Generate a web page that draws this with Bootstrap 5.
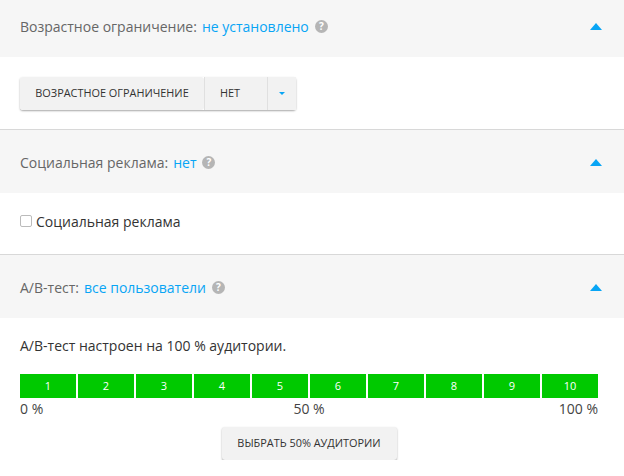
<!DOCTYPE html>
<html lang="ru">
<head>
  <meta charset="UTF-8">
  <meta name="viewport" content="width=device-width, initial-scale=1.0">
  <title>Настройки</title>
  <link href="https://cdn.jsdelivr.net/npm/bootstrap@5.3.2/dist/css/bootstrap.min.css" rel="stylesheet">
  <style>
    body {
      background-color: #fff;
      color: #333;
      font-family: "Open Sans", "Noto Sans", sans-serif;
      font-size: 14px;
      overflow: hidden;
    }
    .sec-head {
      height: 57px;
      padding: 0 20px 5px;
      background-color: #f6f6f6;
      color: #666;
    }
    .sec-head.tall {
      height: 62px;
      padding-bottom: 0;
    }
    .sec-value {
      color: #08a5f5;
      margin-left: 5px;
    }
    .help-dot {
      width: 13px;
      height: 13px;
      margin-left: 6px;
      border-radius: 50%;
      background-color: #b5b5b5;
      color: #fff;
      font-size: 10px;
      font-weight: 700;
      line-height: 13px;
      text-align: center;
    }
    .arrow-up {
      width: 0;
      height: 0;
      margin-left: auto;
      margin-right: 2px;
      border-left: 6px solid transparent;
      border-right: 6px solid transparent;
      border-bottom: 7px solid #08a5f5;
    }
    .sec-body-age {
      height: 72px;
      padding: 20px 20px 0;
    }
    .sec-body-social {
      height: 61px;
      padding: 0 20px 5px;
    }
    .sec-line {
      height: 2px;
      background: #f6f6f6;
      border-top: 1px solid #d8d8d8;
    }
    .gray-btn {
      height: 33px;
      padding: 0 15px;
      border: 0;
      border-radius: 3px;
      background-color: #f2f2f2;
      box-shadow: 0 1px 2px rgba(0, 0, 0, .35);
      color: #333;
      font-size: 10.9px;
      text-transform: uppercase;
    }
    .gray-btn.mid {
      border-radius: 0;
      border-left: 1px solid #e0e0e0;
    }
    .gray-btn.btn-name {
      width: 184px;
    }
    .gray-btn.btn-value {
      width: 63px;
      text-align: left;
    }
    .gray-btn.btn-caret {
      width: 29px;
      padding: 0;
    }
    .gray-btn-group {
      box-shadow: 0 1px 2px rgba(0, 0, 0, .35);
      border-radius: 3px;
    }
    .gray-btn-group .gray-btn {
      box-shadow: none;
    }
    .arrow-down {
      width: 0;
      height: 0;
      border-left: 3px solid transparent;
      border-right: 3px solid transparent;
      border-top: 3px solid #08a5f5;
    }
    .check-box {
      width: 12px;
      height: 12px;
      margin-right: 4px;
      border: 1px solid #bbb;
      border-radius: 2px;
      background: #fff;
    }
    .ab-body {
      padding: 18px 26px 0 20px;
    }
    .ab-title {
      line-height: 19px;
      margin-bottom: 19px;
    }
    .ab-bar {
      display: grid;
      grid-template-columns: repeat(10, 56px);
      gap: 2px;
    }
    .ab-cell {
      height: 24px;
      background-color: #00c900;
      color: #fff;
      font-size: 11px;
      font-weight: 500;
      line-height: 24px;
      text-align: center;
    }
    .ab-scale {
      line-height: 22px;
      margin-bottom: 7px;
      color: #444;
    }
    .ab-scale span {
      flex: 1 1 0;
    }
    .ab-choose {
      width: 175px;
    }
  </style>
</head>
<body>

  <div class="sec-head d-flex align-items-center">
    <span>Возрастное ограничение:</span>
    <span class="sec-value">не установлено</span>
    <span class="help-dot">?</span>
    <span class="arrow-up"></span>
  </div>
  <div class="sec-body-age">
    <div class="gray-btn-group d-inline-flex">
      <button type="button" class="gray-btn btn-name">Возрастное ограничение</button>
      <button type="button" class="gray-btn mid btn-value">Нет</button>
      <button type="button" class="gray-btn mid btn-caret d-flex align-items-center justify-content-center"><span class="arrow-down"></span></button>
    </div>
  </div>
  <div class="sec-line"></div>

  <div class="sec-head tall d-flex align-items-center">
    <span>Социальная реклама:</span>
    <span class="sec-value">нет</span>
    <span class="help-dot">?</span>
    <span class="arrow-up"></span>
  </div>
  <div class="sec-body-social d-flex align-items-center">
    <span class="check-box"></span>
    <span>Социальная реклама</span>
  </div>
  <div class="sec-line"></div>

  <div class="sec-head tall d-flex align-items-center">
    <span>A/B-тест:</span>
    <span class="sec-value">все пользователи</span>
    <span class="help-dot">?</span>
    <span class="arrow-up"></span>
  </div>
  <div class="ab-body">
    <div class="ab-title">A/B-тест настроен на 100 % аудитории.</div>
    <div class="ab-bar">
      <div class="ab-cell">1</div>
      <div class="ab-cell">2</div>
      <div class="ab-cell">3</div>
      <div class="ab-cell">4</div>
      <div class="ab-cell">5</div>
      <div class="ab-cell">6</div>
      <div class="ab-cell">7</div>
      <div class="ab-cell">8</div>
      <div class="ab-cell">9</div>
      <div class="ab-cell">10</div>
    </div>
    <div class="ab-scale d-flex">
      <span>0 %</span>
      <span class="text-center">50 %</span>
      <span class="text-end">100 %</span>
    </div>
    <div class="d-flex justify-content-center">
      <button type="button" class="gray-btn ab-choose">Выбрать 50% аудитории</button>
    </div>
  </div>

</body>
</html>
